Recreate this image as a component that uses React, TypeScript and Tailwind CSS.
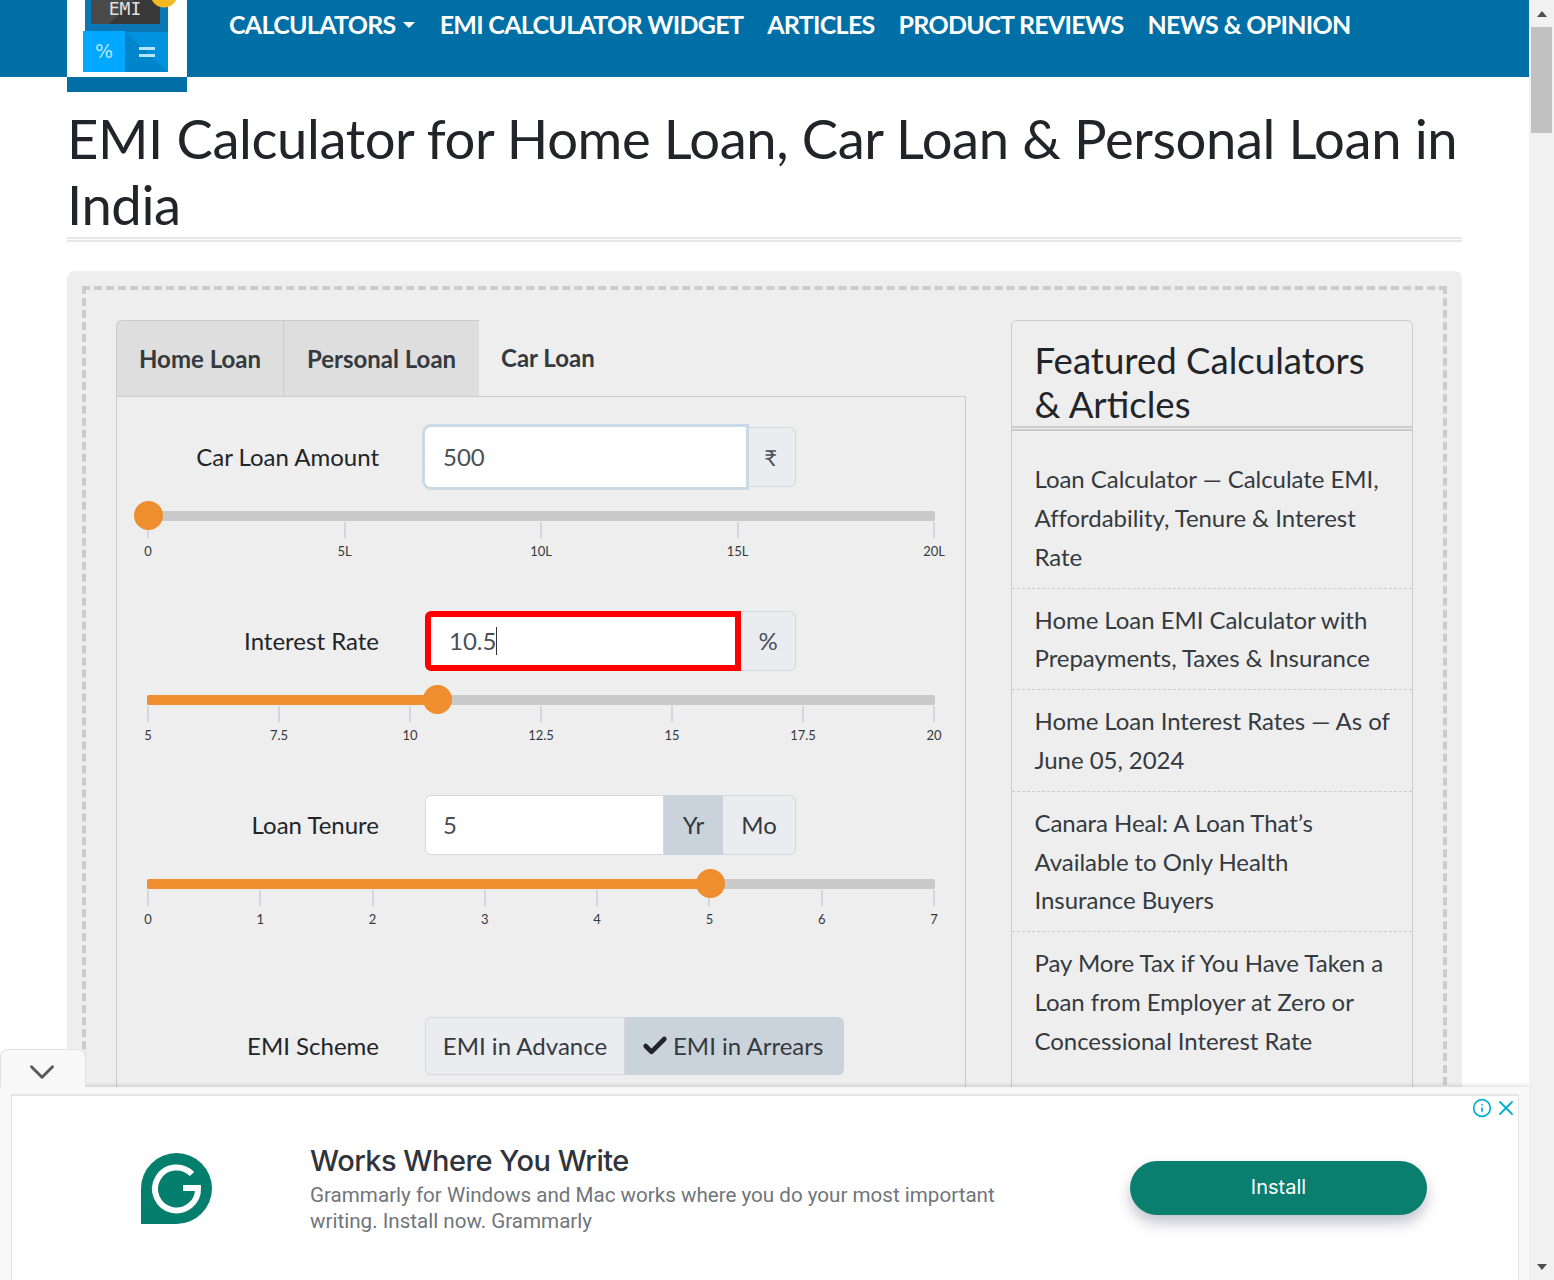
import React from 'react';
import { Check, ChevronDown, Info, X } from 'lucide-react';

const articles = [
  ['Loan Calculator — Calculate EMI,', 'Affordability, Tenure & Interest', 'Rate'],
  ['Home Loan EMI Calculator with', 'Prepayments, Taxes & Insurance'],
  ['Home Loan Interest Rates — As of', 'June 05, 2024'],
  ['Canara Heal: A Loan That’s', 'Available to Only Health', 'Insurance Buyers'],
  ['Pay More Tax if You Have Taken a', 'Loan from Employer at Zero or', 'Concessional Interest Rate'],
];

const navItems = ['EMI CALCULATOR WIDGET', 'ARTICLES', 'PRODUCT REVIEWS', 'NEWS & OPINION'];

const Logo = () => (
  <div className="w-[120px] h-[92px] shrink-0 bg-white border-b-[15px] border-[#006fa6] relative z-10">
    <svg width="120" height="77" viewBox="0 0 120 77" className="block">
      <rect x="18" y="0" width="83" height="33" fill="#0b77b5" />
      <rect x="24" y="0" width="69" height="24" fill="#4a4a4a" />
      <polygon points="42,24 66,0 93,0 93,24" fill="#383838" />
      <text x="58" y="15" textAnchor="middle" fontFamily="'DejaVu Sans Mono', monospace" fontSize="18" fill="#e0e0e0">EMI</text>
      <circle cx="97" cy="-6" r="13.5" fill="#f5b820" />
      <rect x="16" y="31" width="42" height="41" fill="#00a9ff" />
      <rect x="58" y="32" width="43" height="40" fill="#0092de" />
      <polygon points="58,32 101,72 58,72" fill="#0084ca" />
      <text x="37" y="58" textAnchor="middle" fontFamily="'DejaVu Sans', sans-serif" fontSize="19" fill="#b5e6ff">%</text>
      <rect x="72" y="47" width="16" height="3" fill="#b5e6ff" />
      <rect x="72" y="54" width="16" height="3" fill="#b5e6ff" />
    </svg>
  </div>
);

interface SliderProps {
  ticks: string[];
  percent: number;
}

const Slider: React.FC<SliderProps> = ({ ticks, percent }) => {
  return (
    <div className="mt-6">
      <div className="relative h-[10px] bg-[#c9c9c9] rounded-[2px]">
        <div className="h-full bg-[#ee8e2f] rounded-l-[2px]" style={{ width: `${percent}%` }} />
        <div
          className="absolute top-[-10px] w-[29px] h-[29px] -ml-[14px] rounded-full bg-[#ee8e2f]"
          style={{ left: `${percent}%` }}
        />
      </div>
      <div className="flex justify-between mt-px">
        {ticks.map((t) => (
          <div key={t} className="w-[2px] flex flex-col items-center">
            <div className="w-[2px] h-[16px] bg-[#d3d6db] shrink-0" />
            <span className="mt-[3px] text-[13px] leading-[20px] text-[#343a40] whitespace-nowrap">{t}</span>
          </div>
        ))}
      </div>
    </div>
  );
};

const FormLabel = ({ children }: { children: React.ReactNode }) => (
  <div className="w-[232px] mr-[46px] text-right text-[24px] text-[#212529]">{children}</div>
);

export default function App() {
  return (
    <div className="relative h-[1280px] overflow-hidden flex bg-white font-['Lato','Liberation_Sans',sans-serif]">
      <div className="w-[1529px] shrink-0">
        {/* header */}
        <div className="h-[77px] bg-[#006fa6] flex px-[67px]">
          <Logo />
          <div className="flex items-start ml-[42px] pt-[6px] text-[25px] leading-[36px] font-bold text-white tracking-[-0.7px] gap-6">
            <span className="flex items-center">
              CALCULATORS
              <span className="ml-[7px] mr-[1px] mt-[1px] border-x-[6px] border-x-transparent border-t-[6px] border-t-white" />
            </span>
            {navItems.map((n) => (
              <span key={n}>{n}</span>
            ))}
          </div>
        </div>

        <div className="px-[67px]">
          <div className="w-[1395px]">
            <h1 className="pt-[28px] border-b-[5px] border-double border-[#e6e6e6] text-[54.4px] leading-[66px] text-[#212529] tracking-[-0.4px] whitespace-nowrap">
              EMI Calculator for Home Loan, Car Loan &amp; Personal Loan in
              <br />
              India
            </h1>

            {/* calculator card */}
            <div className="mt-[29px] bg-[#eeeeee] rounded-[8px] p-[15px]">
              <div className="border-4 border-dashed border-[#cccccc] p-[30px] flex">
                {/* left: tabs */}
                <div className="w-[850px] shrink-0">
                  <div className="flex h-[77px] text-[24px] text-[#343a40] font-bold">
                    <div className="w-[167px] flex items-center justify-center bg-[#dedede] border border-[#cccccc] border-r-0 rounded-tl-[6px]">
                      Home Loan
                    </div>
                    <div className="w-[196px] flex items-center justify-center bg-[#dedede] border border-[#cccccc] border-r-0">
                      Personal Loan
                    </div>
                    <div className="flex-1 border-b border-[#cccccc] pl-[22px] pt-[20px] leading-[36px]">
                      Car Loan
                    </div>
                  </div>

                  <div className="border-x border-[#cccccc] px-[30px] pt-[30px] pb-[60px]">
                    {/* amount */}
                    <div className="h-[184px]">
                      <div className="flex items-center h-[60px]">
                        <FormLabel>Car Loan Amount</FormLabel>
                        <div className="w-[321px] h-[60px] bg-white rounded-l-[6px] ring-[3px] ring-[#c9d9e5] flex items-center pl-[18px] text-[24px] text-[#495057] relative">
                          500
                        </div>
                        <div className="w-[50px] h-[60px] flex items-center justify-center bg-[#eaecf0] border border-l-0 border-[#d5d8df] rounded-r-[6px] text-[22px] text-[#495057]">
                          ₹
                        </div>
                      </div>
                      <Slider ticks={['0', '5L', '10L', '15L', '20L']} percent={0.1} />
                    </div>

                    {/* interest */}
                    <div className="h-[184px]">
                      <div className="flex items-center h-[60px]">
                        <FormLabel>Interest Rate</FormLabel>
                        <div className="w-[316px] h-[60px] bg-white rounded-l-[6px] border-[6px] border-[#ff0000] flex items-center pl-[18px] text-[24px] text-[#495057]">
                          10.5
                          <span className="w-px h-[28px] bg-[#333333]" />
                        </div>
                        <div className="w-[55px] h-[60px] flex items-center justify-center bg-[#eaecf0] border border-l-0 border-[#d5d8df] rounded-r-[6px] text-[24px] text-[#495057]">
                          %
                        </div>
                      </div>
                      <Slider ticks={['5', '7.5', '10', '12.5', '15', '17.5', '20']} percent={36.8} />
                    </div>

                    {/* tenure */}
                    <div className="h-[222px]">
                      <div className="flex items-center h-[60px]">
                        <FormLabel>Loan Tenure</FormLabel>
                        <div className="w-[239px] h-[60px] bg-white rounded-l-[6px] border border-[#d5d8df] flex items-center pl-[17px] text-[24px] text-[#495057]">
                          5
                        </div>
                        <div className="w-[59px] h-[60px] flex items-center justify-center bg-[#cad3db] text-[24px] text-[#343a40]">
                          Yr
                        </div>
                        <div className="w-[73px] h-[60px] flex items-center justify-center bg-[#eaecf0] border border-l-0 border-[#d5d8df] rounded-r-[6px] text-[24px] text-[#343a40]">
                          Mo
                        </div>
                      </div>
                      <Slider ticks={['0', '1', '2', '3', '4', '5', '6', '7']} percent={71.4} />
                    </div>

                    {/* scheme */}
                    <div className="flex items-center h-[58px]">
                      <FormLabel>EMI Scheme</FormLabel>
                      <div className="w-[200px] h-[58px] flex items-center justify-center bg-[#eaecf0] border border-[#d5d8df] rounded-l-[6px] text-[24px] text-[#343a40]">
                        EMI in Advance
                      </div>
                      <div className="w-[219px] h-[58px] flex items-center pl-[16px] bg-[#cad3db] rounded-r-[6px] text-[24px] text-[#343a40] whitespace-nowrap">
                        <Check className="w-[28px] h-[28px] mr-[4px] text-[#212529]" strokeWidth={4} />
                        EMI in Arrears
                      </div>
                    </div>
                  </div>
                </div>

                {/* right: featured list */}
                <div className="w-[402px] ml-[45px] shrink-0 border border-[#cccccc] rounded-t-[6px] self-start pb-[60px]">
                  <h2 className="px-[22.5px] pt-[17px] border-b-[5px] border-double border-[#cccccc] text-[36.6px] leading-[44px] text-[#212529]">
                    Featured Calculators &amp; Articles
                  </h2>
                  {articles.map((lines, i) => (
                    <div
                      key={lines[0]}
                      className={`px-[22.5px] text-[24px] leading-[38.8px] text-[#343a40] tracking-[-0.05px] ${
                        i === 0 ? 'pt-[29px] pb-[11.2px]' : 'pt-[12px] pb-[11px] border-t border-dashed border-[#cccccc]'
                      }`}
                    >
                      {lines.map((l) => (
                        <div key={l} className="whitespace-nowrap">
                          {l}
                        </div>
                      ))}
                    </div>
                  ))}
                </div>
              </div>
            </div>
          </div>
        </div>
      </div>

      {/* browser scrollbar */}
      <div className="w-[25px] shrink-0 bg-[#f1f1f1] flex flex-col items-center relative z-30">
        <div className="h-[27px] w-full flex items-center justify-center">
          <span className="border-x-[5px] border-x-transparent border-b-[6px] border-b-[#505050]" />
        </div>
        <div className="w-[21px] h-[106px] bg-[#c1c1c1]" />
        <div className="flex-1" />
        <div className="h-[27px] w-full flex items-center justify-center">
          <span className="border-x-[5px] border-x-transparent border-t-[6px] border-t-[#505050]" />
        </div>
      </div>

      {/* anchor ad */}
      <div className="absolute left-0 top-[1087px] w-[1529px] h-[193px] z-20 bg-[#f8f8f8] pt-[7px] pl-[11px] pr-[10px] shadow-[0_-2px_4px_rgba(0,0,0,0.12)]">
        <div className="absolute left-0 top-[-38px] w-[86px] h-[38px] bg-[#f8f8f8] rounded-t-[8px] border border-b-0 border-[#e2e2e2] flex items-center justify-center">
          <ChevronDown className="w-[42px] h-[42px] shrink-0 mt-[7px] -ml-[2px] text-[#5a5a5a]" strokeWidth={1.7} />
        </div>
        <div className="relative h-full bg-white border-t-2 border-x border-[#e6e6e6] flex items-start pl-[129px] font-['Roboto','Liberation_Sans',sans-serif]">
          <svg width="71" height="71" viewBox="0 0 71 71" className="mt-[57px] shrink-0">
            <path d="M0 71V35.5a35.5 35.5 0 1 1 35.5 35.5Z" fill="#047f6d" />
            <path d="M51 21A21.5 21.5 0 1 0 57 35H42" fill="none" stroke="#ffffff" strokeWidth="6" />
          </svg>
          <div className="ml-[98px] mt-[47px] w-[720px]">
            <div className="text-[29px] leading-[36px] text-[#30343a] font-medium font-['Inter','Roboto',sans-serif] tracking-[-0.5px]">
              Works Where You Write
            </div>
            <div className="mt-[3px] text-[20.6px] leading-[26px] text-[#70757a]">
              Grammarly for Windows and Mac works where you do your most important writing. Install now. Grammarly
            </div>
          </div>
          <div className="absolute left-[1118px] top-[65px] w-[297px] h-[54px] rounded-full bg-[#0a7e6f] shadow-[0_8px_14px_rgba(60,64,90,0.3)] flex items-center justify-center text-[20px] text-white font-['Inter','Roboto',sans-serif] pb-[2px]">
            Install
          </div>
          <Info className="absolute right-[26px] top-[2px] w-[20px] h-[20px] text-[#00aecd]" strokeWidth={2} />
          <X className="absolute right-[0px] top-[0px] w-[24px] h-[24px] text-[#00aecd]" strokeWidth={1.8} />
        </div>
      </div>
    </div>
  );
}
